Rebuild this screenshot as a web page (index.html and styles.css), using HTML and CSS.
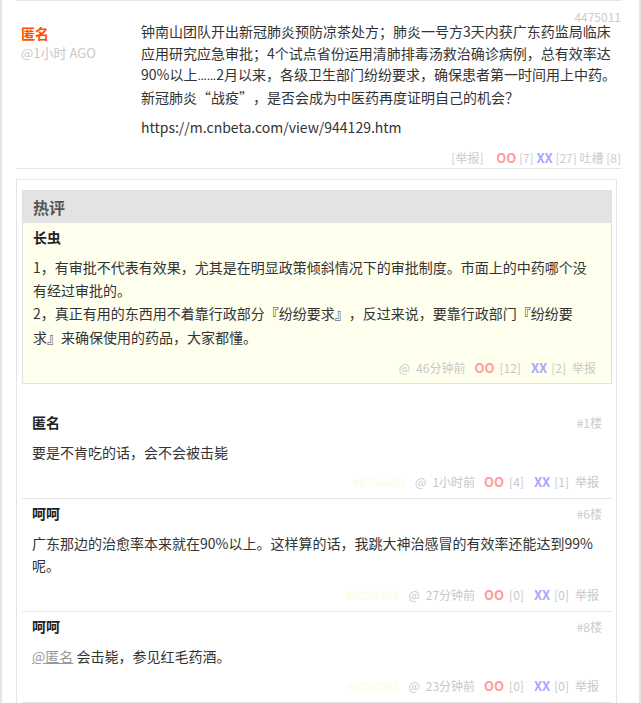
FILE: index.html
```
<!DOCTYPE html>
<html lang="zh-CN">
<head>
<meta charset="utf-8">
<title>煎蛋 - 评论</title>
<link rel="stylesheet" href="styles.css">
</head>
<body>
<div class="page">
  <div class="post">
    <div class="author">
      <div class="author-name">匿名</div>
      <div class="author-time">@1小时 AGO</div>
    </div>
    <div class="post-main">
      <div class="post-id">4475011</div>
      <p class="post-text">钟南山团队开出新冠肺炎预防凉茶处方；肺炎一号方3天内获广东药监局临床<br>应用研究应急审批；4个试点省份运用清肺排毒汤救治确诊病例，总有效率达<br>90%以上<span class="ellip">……</span>2月以来，各级卫生部门纷纷要求，确保患者第一时间用上中药。<br>新冠肺炎“战疫”，是否会成为中医药再度证明自己的机会？</p>
      <p class="post-link">https://m.cnbeta.com/view/944129.htm</p>
      <div class="post-foot">
        <span class="report">[举报]</span>
        <span class="oo">OO</span> <span class="cnt">[7]</span>
        <span class="xx">XX</span> <span class="cnt">[27]</span>
        <span class="cnt">吐槽 [8]</span>
      </div>
    </div>
  </div>

  <div class="box">
    <div class="hot">
      <div class="hot-title">热评</div>
      <div class="hot-body">
        <div class="c-name">长虫</div>
        <p class="hot-text">1，有审批不代表有效果，尤其是在明显政策倾斜情况下的审批制度。市面上的中药哪个没有经过审批的。<br>2，真正有用的东西用不着靠行政部分『纷纷要求』，反过来说，要靠行政部门『纷纷要求』来确保使用的药品，大家都懂。</p>
        <div class="foot">
          <span class="at">@</span><span class="time">46分钟前</span><span class="oo">OO</span><span class="cnt">[12]</span><span class="xx">XX</span><span class="cnt">[2]</span><span class="rep">举报</span>
        </div>
      </div>
    </div>

    <ul class="comments">
      <li class="comment">
        <div class="c-head"><span class="c-name">匿名</span><span class="floor">#1楼</span></div>
        <p class="c-text">要是不肯吃的话，会不会被击毙</p>
        <div class="foot">
          <span class="cid">#6254404</span><span class="at">@</span><span class="time">1小时前</span><span class="oo">OO</span><span class="cnt">[4]</span><span class="xx">XX</span><span class="cnt">[1]</span><span class="rep">举报</span>
        </div>
      </li>
      <li class="comment">
        <div class="c-head"><span class="c-name">呵呵</span><span class="floor">#6楼</span></div>
        <p class="c-text">广东那边的治愈率本来就在90%以上。这样算的话，我跳大神治感冒的有效率还能达到99%呢。</p>
        <div class="foot">
          <span class="cid">#6254556</span><span class="at">@</span><span class="time">27分钟前</span><span class="oo">OO</span><span class="cnt">[0]</span><span class="xx">XX</span><span class="cnt">[0]</span><span class="rep">举报</span>
        </div>
      </li>
      <li class="comment">
        <div class="c-head"><span class="c-name">呵呵</span><span class="floor">#8楼</span></div>
        <p class="c-text"><a class="mention" href="#">@匿名</a> 会击毙，参见红毛药酒。</p>
        <div class="foot">
          <span class="cid">#6254581</span><span class="at">@</span><span class="time">23分钟前</span><span class="oo">OO</span><span class="cnt">[0]</span><span class="xx">XX</span><span class="cnt">[0]</span><span class="rep">举报</span>
        </div>
      </li>
    </ul>
  </div>
</div>
</body>
</html>
```
FILE: styles.css
```
* { box-sizing: border-box; }
html, body { margin: 0; padding: 0; background: #fff; }
body {
  font-family: "Noto Sans CJK SC", "Microsoft YaHei", sans-serif;
  font-size: 14px;
  color: #333;
  text-spacing-trim: space-all;
  text-autospace: no-autospace;
}
p { margin: 0; }
ul { margin: 0; padding: 0; list-style: none; }

.page {
  width: 641px;
  min-height: 703px;
  border-left: 2px solid #e6e6e6;
  border-right: 2px solid #e6e6e6;
  overflow: hidden;
}

/* top post */
.post {
  display: flex;
  margin: 0 18px 0 14px;
  border-top: 1px solid #e5e5e5;
  border-bottom: 1px solid #e5e5e5;
}
.author {
  width: 125px;
  flex: none;
  padding: 22px 0 0 5px;
}
.author-name {
  color: #ff5000;
  font-weight: bold;
  line-height: 20px;
}
.author-time {
  color: #c8c8c8;
  font-size: 13px;
  line-height: 20px;
}
.post-main {
  flex: 1;
  min-width: 0;
  padding: 12px 0 2px;
}
.post-id {
  text-align: right;
  color: #ccc;
  font-size: 12px;
  line-height: 8px;
}
.post-text {
  line-height: 21.7px;
  white-space: nowrap;
}
.ellip {
  font-family: Roboto, "Liberation Sans", sans-serif;
}
.post-link {
  margin-top: 7px;
  line-height: 22px;
}
.post-foot {
  margin-top: 12px;
  text-align: right;
  font-size: 12px;
  line-height: 16px;
  color: #ccc;
}
.post-foot .report { margin-right: 10px; }

/* comment box */
.box {
  margin: 10px 22px 0 14px;
  border: 1px solid #e5e5e5;
  padding: 10px 4px 0 5px;
}
.hot {
  border: 1px solid #e0e0e0;
}
.hot-title {
  background: #e3e3e3;
  height: 32px;
  line-height: 32px;
  padding-left: 10px;
  font-size: 16px;
  font-weight: bold;
  color: #555;
}
.hot-body {
  background: #ffffee;
  padding: 4px 12px 7px 10px;
}
.c-name {
  font-weight: bold;
  line-height: 20px;
  color: #222;
}
.hot-text {
  margin-top: 9px;
  line-height: 23.3px;
}

.foot {
  text-align: right;
  font-size: 12px;
  line-height: 16px;
  color: #c8c8c8;
  padding-right: 3px;
}
.hot-body .foot { margin-top: 11px; }
.foot .cid { color: #fcfce4; margin-right: 9px; }
.foot .time { margin-left: 6px; margin-right: 9px; }
.foot .cnt { margin-left: 5px; margin-right: 10px; }
.foot .xx + .cnt { margin-left: 4px; margin-right: 6px; }
.oo, .xx { font-weight: bold; font-size: 13px; }
.oo { color: #ff9c9c; }
.xx { color: #a8a8ff; }

.comments { margin-top: 24px; }
.comment {
  border-bottom: 1px solid #e5e5e5;
  padding: 4px 10px 6px;
}
.c-head {
  display: flex;
  justify-content: space-between;
  align-items: center;
}
.floor {
  color: #ccc;
  font-size: 12px;
}
.c-text {
  margin-top: 9px;
  line-height: 22px;
}
.comment .foot {
  margin-top: 9px;
  line-height: 20px;
}
.mention {
  color: #999;
  text-decoration: underline;
}
```
